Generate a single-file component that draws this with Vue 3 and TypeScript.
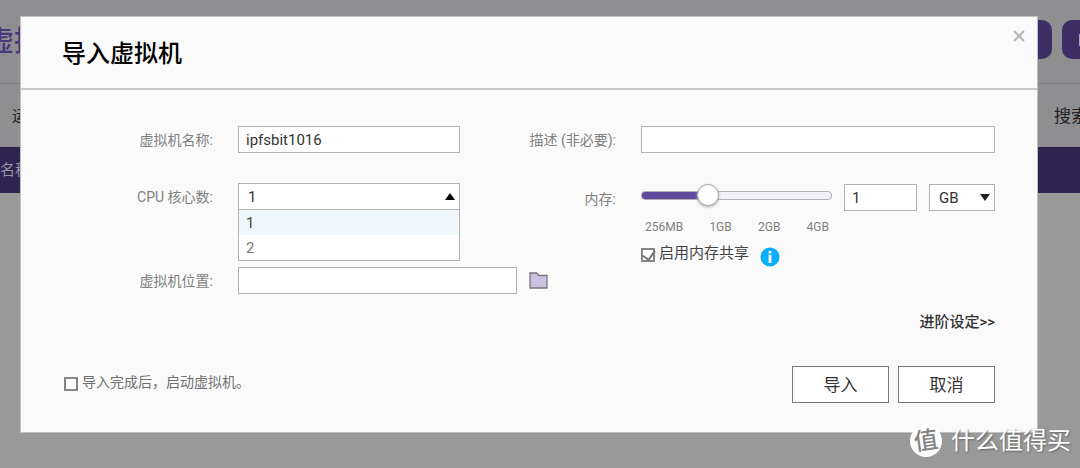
<script setup lang="ts">
import { computed, ref } from 'vue'

const vmName = ref('ipfsbit1016')
const description = ref('')
const location = ref('')
const cores = ref(1)
const coreOptions = [1, 2]
const menuOpen = ref(true)
const memoryPosition = ref(33)
const memory = ref('1')
const unit = ref('GB')
const shareMemory = ref(true)
const startAfterImport = ref(false)
const ticks = ['256MB', '1GB', '2GB', '4GB']

const sliderFill = computed(() => ({ '--fill': `${memoryPosition.value}%` }))

function pickCores(value: number) {
  cores.value = value
  menuOpen.value = false
}
</script>

<template>
  <div class="page">
    <div class="backdrop" aria-hidden="true">
      <div class="app-header">
        <span class="app-title">虚拟机</span>
        <div class="app-actions">
          <span class="app-button"></span>
          <span class="app-button"><i></i></span>
        </div>
      </div>
      <div class="app-toolbar">
        <span>运行</span>
        <span class="search">搜索</span>
      </div>
      <div class="app-table-head">名称</div>
    </div>

    <form class="dialog" role="dialog" aria-labelledby="dialog-title" @submit.prevent>
      <header class="dialog-header">
        <h1 id="dialog-title">导入虚拟机</h1>
        <button class="close" type="button" aria-label="关闭">
          <svg width="12" height="12" viewBox="0 0 12 12">
            <path d="M1 1L11 11M11 1L1 11" fill="none" stroke="#b4b4b4" stroke-width="2" />
          </svg>
        </button>
      </header>

      <div class="fields">
        <label class="label" for="vm-name">虚拟机名称:</label>
        <input id="vm-name" v-model="vmName" class="box" type="text" />

        <label class="label" for="vm-desc">描述 (非必要):</label>
        <input id="vm-desc" v-model="description" class="box" type="text" />

        <label class="label" for="vm-cpu">CPU 核心数:</label>
        <div class="select">
          <select id="vm-cpu" v-model="cores" class="box" @mousedown.prevent="menuOpen = !menuOpen">
            <option v-for="n in coreOptions" :key="n" :value="n">{{ n }}</option>
          </select>
          <svg class="arrow" width="10" height="7" viewBox="0 0 10 7">
            <path d="M5 0L10 7H0Z" fill="#000" />
          </svg>
          <ul v-if="menuOpen" class="menu" role="listbox">
            <li
              v-for="n in coreOptions"
              :key="n"
              role="option"
              :aria-selected="n === cores"
              :class="{ active: n === cores }"
              @click="pickCores(n)"
            >{{ n }}</li>
          </ul>
        </div>

        <label class="label memory-label" for="vm-memory">内存:</label>
        <div class="memory">
          <div class="memory-row">
            <div class="slider">
              <input
                id="vm-memory"
                v-model.number="memoryPosition"
                type="range"
                min="0"
                max="100"
                :style="sliderFill"
              />
              <div class="ticks">
                <span v-for="t in ticks" :key="t">{{ t }}</span>
              </div>
            </div>
            <input v-model="memory" class="box amount" type="text" aria-label="内存大小" />
            <div class="select unit">
              <select v-model="unit" class="box" aria-label="内存单位">
                <option>GB</option>
                <option>MB</option>
              </select>
              <svg class="arrow" width="10" height="7" viewBox="0 0 10 7">
                <path d="M0 0H10L5 7Z" fill="#222" />
              </svg>
            </div>
          </div>
          <div class="share-row">
            <label class="check dark">
              <input v-model="shareMemory" type="checkbox" />
              <span>启用内存共享</span>
            </label>
            <svg class="info" width="20" height="20" viewBox="0 0 20 20">
              <circle cx="10" cy="10" r="9.5" fill="#0aaeff" />
              <path d="M8.6 4h2.8v2.4H8.6zM8.6 7.8h2.8V16H8.6z" fill="#fff" />
            </svg>
          </div>
        </div>

        <label class="label" for="vm-location">虚拟机位置:</label>
        <div class="location">
          <input id="vm-location" v-model="location" class="box" type="text" />
          <button class="folder" type="button" aria-label="浏览">
            <svg width="19" height="17" viewBox="0 0 19 17">
              <path d="M1 1H7.5L10 3.5H18V16H1Z" fill="#cbc1e2" stroke="#77747f" stroke-width="1.3" />
            </svg>
          </button>
        </div>
      </div>

      <a class="advanced" href="#">进阶设定&gt;&gt;</a>

      <footer class="dialog-footer">
        <label class="check">
          <input v-model="startAfterImport" type="checkbox" />
          <span>导入完成后，启动虚拟机。</span>
        </label>
        <div class="actions">
          <button type="submit">导入</button>
          <button type="button">取消</button>
        </div>
      </footer>
    </form>

    <div class="watermark">
      <span class="mark"><b>值</b></span>
      <span>什么值得买</span>
    </div>
  </div>
</template>

<style>
body {
  margin: 0;
}
</style>

<style scoped>
.page,
.page * {
  box-sizing: border-box;
}
.page {
  position: relative;
  min-height: 100vh;
  padding: 16px 42px 35px 20px;
  overflow: hidden;
  background: #999;
  font-family: Roboto, "Noto Sans CJK SC", sans-serif;
  font-size: 15px;
  line-height: 20px;
  color: #333;
}
input,
select,
button {
  font: inherit;
  color: inherit;
  margin: 0;
}

/* Dimmed application behind the dialog */
.backdrop {
  position: absolute;
  inset: 0;
  overflow: hidden;
}
.app-header {
  display: flex;
  align-items: center;
  justify-content: space-between;
  height: 84px;
  background: #8f8f92;
  border-bottom: 1px solid #7c7c80;
}
.app-title {
  margin-left: -14px;
  font-size: 28px;
  font-weight: 500;
  color: #4a377c;
}
.app-actions {
  display: flex;
  gap: 10px;
  margin: 0 -60px 4px 0;
}
.app-button {
  display: flex;
  align-items: center;
  width: 78px;
  height: 39px;
  padding-left: 17px;
  border-radius: 10px;
  background: #3f2e66;
}
.app-button i {
  width: 14px;
  height: 12px;
  border: 1px solid #aaa2bd;
}
.app-toolbar {
  display: flex;
  align-items: center;
  justify-content: space-between;
  height: 63px;
  padding: 1px 0 0 12px;
  background: #8f8f92;
  color: #222;
}
.app-toolbar .search {
  margin-right: -8px;
  font-size: 17px;
}
.app-table-head {
  height: 46px;
  line-height: 46px;
  background: #2f234f;
  color: #9a96a6;
}

/* Dialog */
.dialog {
  position: relative;
  border: 1px solid #c0c0c0;
  background: #fafafa;
}
.dialog-header {
  display: flex;
  align-items: flex-start;
  justify-content: space-between;
  height: 73px;
  padding: 13px 10px 0 41px;
  border-bottom: 2px solid #c8c8c8;
}
h1 {
  margin: 8px 0 0;
  font-size: 24px;
  font-weight: 500;
  line-height: 32px;
  color: #000;
}
.close {
  display: flex;
  padding: 0 2px;
  border: 0;
  background: none;
}
.fields {
  display: grid;
  grid-template-columns: 149px 222fr 131px 354fr;
  grid-template-rows: 27px 54px auto;
  gap: 30px 25px;
  align-items: start;
  padding: 36px 42px 0 43px;
}
.label {
  font-size: 14px;
  line-height: 29px;
  text-align: right;
  white-space: nowrap;
  color: #808080;
}
.box {
  display: block;
  width: 100%;
  min-width: 0;
  height: 27px;
  padding: 0 7px;
  border: 1px solid #b2b2b2;
  border-radius: 0;
  outline: 0;
  background: #fff;
}
.select {
  position: relative;
}
.select select {
  appearance: none;
  padding: 0 9px;
}
.arrow {
  position: absolute;
  top: 10px;
  right: 5px;
  pointer-events: none;
}
.menu {
  position: absolute;
  top: 100%;
  left: 0;
  right: 0;
  z-index: 1;
  margin: -1px 0 0;
  padding: 0;
  border: 1px solid #b2b2b2;
  background: #fff;
  list-style: none;
}
.menu li {
  height: 25px;
  padding: 0 7px;
  line-height: 26px;
  color: #777;
}
.menu li.active {
  background: #f0f7fb;
  color: #444;
}
.memory-label {
  line-height: 33px;
}
.memory {
  grid-row: 2 / span 2;
  grid-column: 4;
  padding-top: 1px;
}
.memory-row {
  display: flex;
  gap: 12px;
}
.slider {
  flex: 1;
  min-width: 0;
}
.amount {
  width: 73px;
}
.unit {
  width: 66px;
}
input[type="range"] {
  display: block;
  width: 100%;
  height: 22px;
  appearance: none;
  background: none;
}
input[type="range"]::-webkit-slider-runnable-track {
  height: 9px;
  border: 1px solid #aeaeb4;
  border-radius: 4px;
  background: linear-gradient(to right, #5f4a9c var(--fill), #f1f1f7 var(--fill));
}
input[type="range"]::-webkit-slider-thumb {
  appearance: none;
  width: 22px;
  height: 22px;
  margin-top: -8px;
  border: 1px solid #aaa;
  border-radius: 50%;
  background: #fff;
  box-shadow: 0 1px 3px #aaa;
}
.ticks {
  display: flex;
  justify-content: space-between;
  padding: 11px 3px 0 4px;
  font-size: 12px;
  color: #808080;
}
.share-row {
  display: flex;
  align-items: flex-start;
  gap: 11px;
  margin-top: 6px;
}
.info {
  margin-top: 4px;
}
.check {
  display: flex;
  align-items: flex-start;
  gap: 4px;
  font-size: 14px;
  color: #707070;
}
.check.dark {
  font-size: 15px;
  color: #444;
}
.check input {
  display: grid;
  place-content: center;
  width: 14px;
  height: 14px;
  margin-top: 5px;
  appearance: none;
  border: 2px solid #858585;
  background: #fff;
}
.check input:checked::before {
  content: "";
  width: 6px;
  height: 10px;
  margin: -2px 0 0 1px;
  border: solid #777;
  border-width: 0 2px 2px 0;
  transform: rotate(35deg);
}
.location {
  display: flex;
  align-items: center;
  grid-column: 2 / span 2;
  gap: 12px;
}
.location .box {
  flex: 0 1 279px;
}
.folder {
  display: flex;
  padding: 0;
  border: 0;
  background: none;
}
.advanced {
  display: block;
  margin: 16px 42px 0;
  font-weight: 500;
  text-align: right;
  text-decoration: none;
  color: #333;
}
.dialog-footer {
  display: flex;
  align-items: flex-start;
  justify-content: space-between;
  padding: 34px 42px 29px 43px;
}
.dialog-footer .check {
  margin-top: 6px;
}
.actions {
  display: flex;
  gap: 9px;
}
.actions button {
  width: 97px;
  height: 37px;
  padding: 0;
  border: 1px solid #777;
  background: #fff;
  font-size: 17px;
}

.watermark {
  position: absolute;
  right: 9px;
  bottom: 10px;
  display: flex;
  align-items: center;
  gap: 9px;
  font-size: 24px;
  line-height: 34px;
  color: #fff;
  text-shadow: 1px 1px 2px #666;
  pointer-events: none;
}
.mark {
  display: grid;
  place-items: center;
  width: 32px;
  height: 32px;
  border-radius: 50%;
  background: #fff;
  text-shadow: none;
  line-height: 32px;
  color: #858585;
}
.mark b {
  font-weight: 500;
  transform: rotate(-8deg);
}
</style>
